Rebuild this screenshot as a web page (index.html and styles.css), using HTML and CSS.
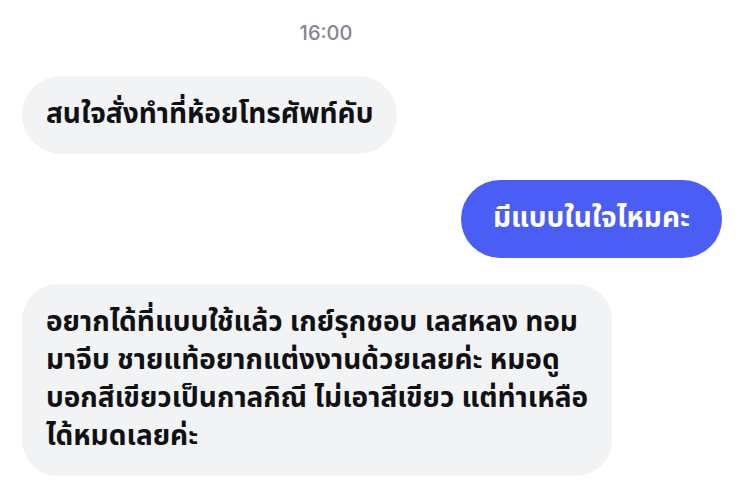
FILE: index.html
```html
<!DOCTYPE html>
<html lang="th">
<head>
<meta charset="utf-8">
<title>Chat</title>
<link rel="stylesheet" href="styles.css">
</head>
<body>
<div class="chat">
  <div class="time">16:00</div>
  <div class="row row--in">
    <div class="bubble bubble--in">สนใจสั่งทำที่ห้อยโทรศัพท์คับ</div>
  </div>
  <div class="row row--out">
    <div class="bubble bubble--out">มีแบบในใจไหมคะ</div>
  </div>
  <div class="row row--in">
    <div class="bubble bubble--in bubble--wide">อยากได้ที่แบบใช้แล้ว เกย์รุกชอบ เลสหลง ทอม<br>มาจีบ ชายแท้อยากแต่งงานด้วยเลยค่ะ หมอดู<br>บอกสีเขียวเป็นกาลกิณี ไม่เอาสีเขียว แต่ท่าเหลือ<br>ได้หมดเลยค่ะ</div>
  </div>
</div>
</body>
</html>
```

FILE: styles.css
```css
html, body {
  margin: 0;
  padding: 0;
  background: #ffffff;
}

body {
  font-family: "Noto Sans Thai", "Noto Sans", "DejaVu Sans", sans-serif;
  width: 738px;
  height: 488px;
  overflow: hidden;
}

.chat {
  display: flex;
  flex-direction: column;
  gap: 26px;
  padding: 0 16px 0 22px;
}

.time {
  margin-top: 22px;
  margin-bottom: 6px;
  padding-right: 92px;
  text-align: center;
  font-family: "Inter", "Liberation Sans", sans-serif;
  font-size: 20px;
  font-weight: 500;
  line-height: 22px;
  color: #86868b;
}

.row {
  display: flex;
}

.row--in {
  justify-content: flex-start;
}

.row--out {
  justify-content: flex-end;
}

.bubble {
  max-width: 84%;
  box-sizing: border-box;
  padding: 20px 24px;
  border-radius: 39px;
  font-size: 28px;
  line-height: 38px;
  font-weight: 700;
  white-space: nowrap;
}

.bubble--in {
  background: #f2f3f5;
  color: #111114;
}

.bubble--out {
  background: #4a5ef6;
  color: #ffffff;
  padding: 20px 32px;
}

.bubble--wide {
  width: 590px;
  max-width: none;
  border-radius: 36px;
}
```
